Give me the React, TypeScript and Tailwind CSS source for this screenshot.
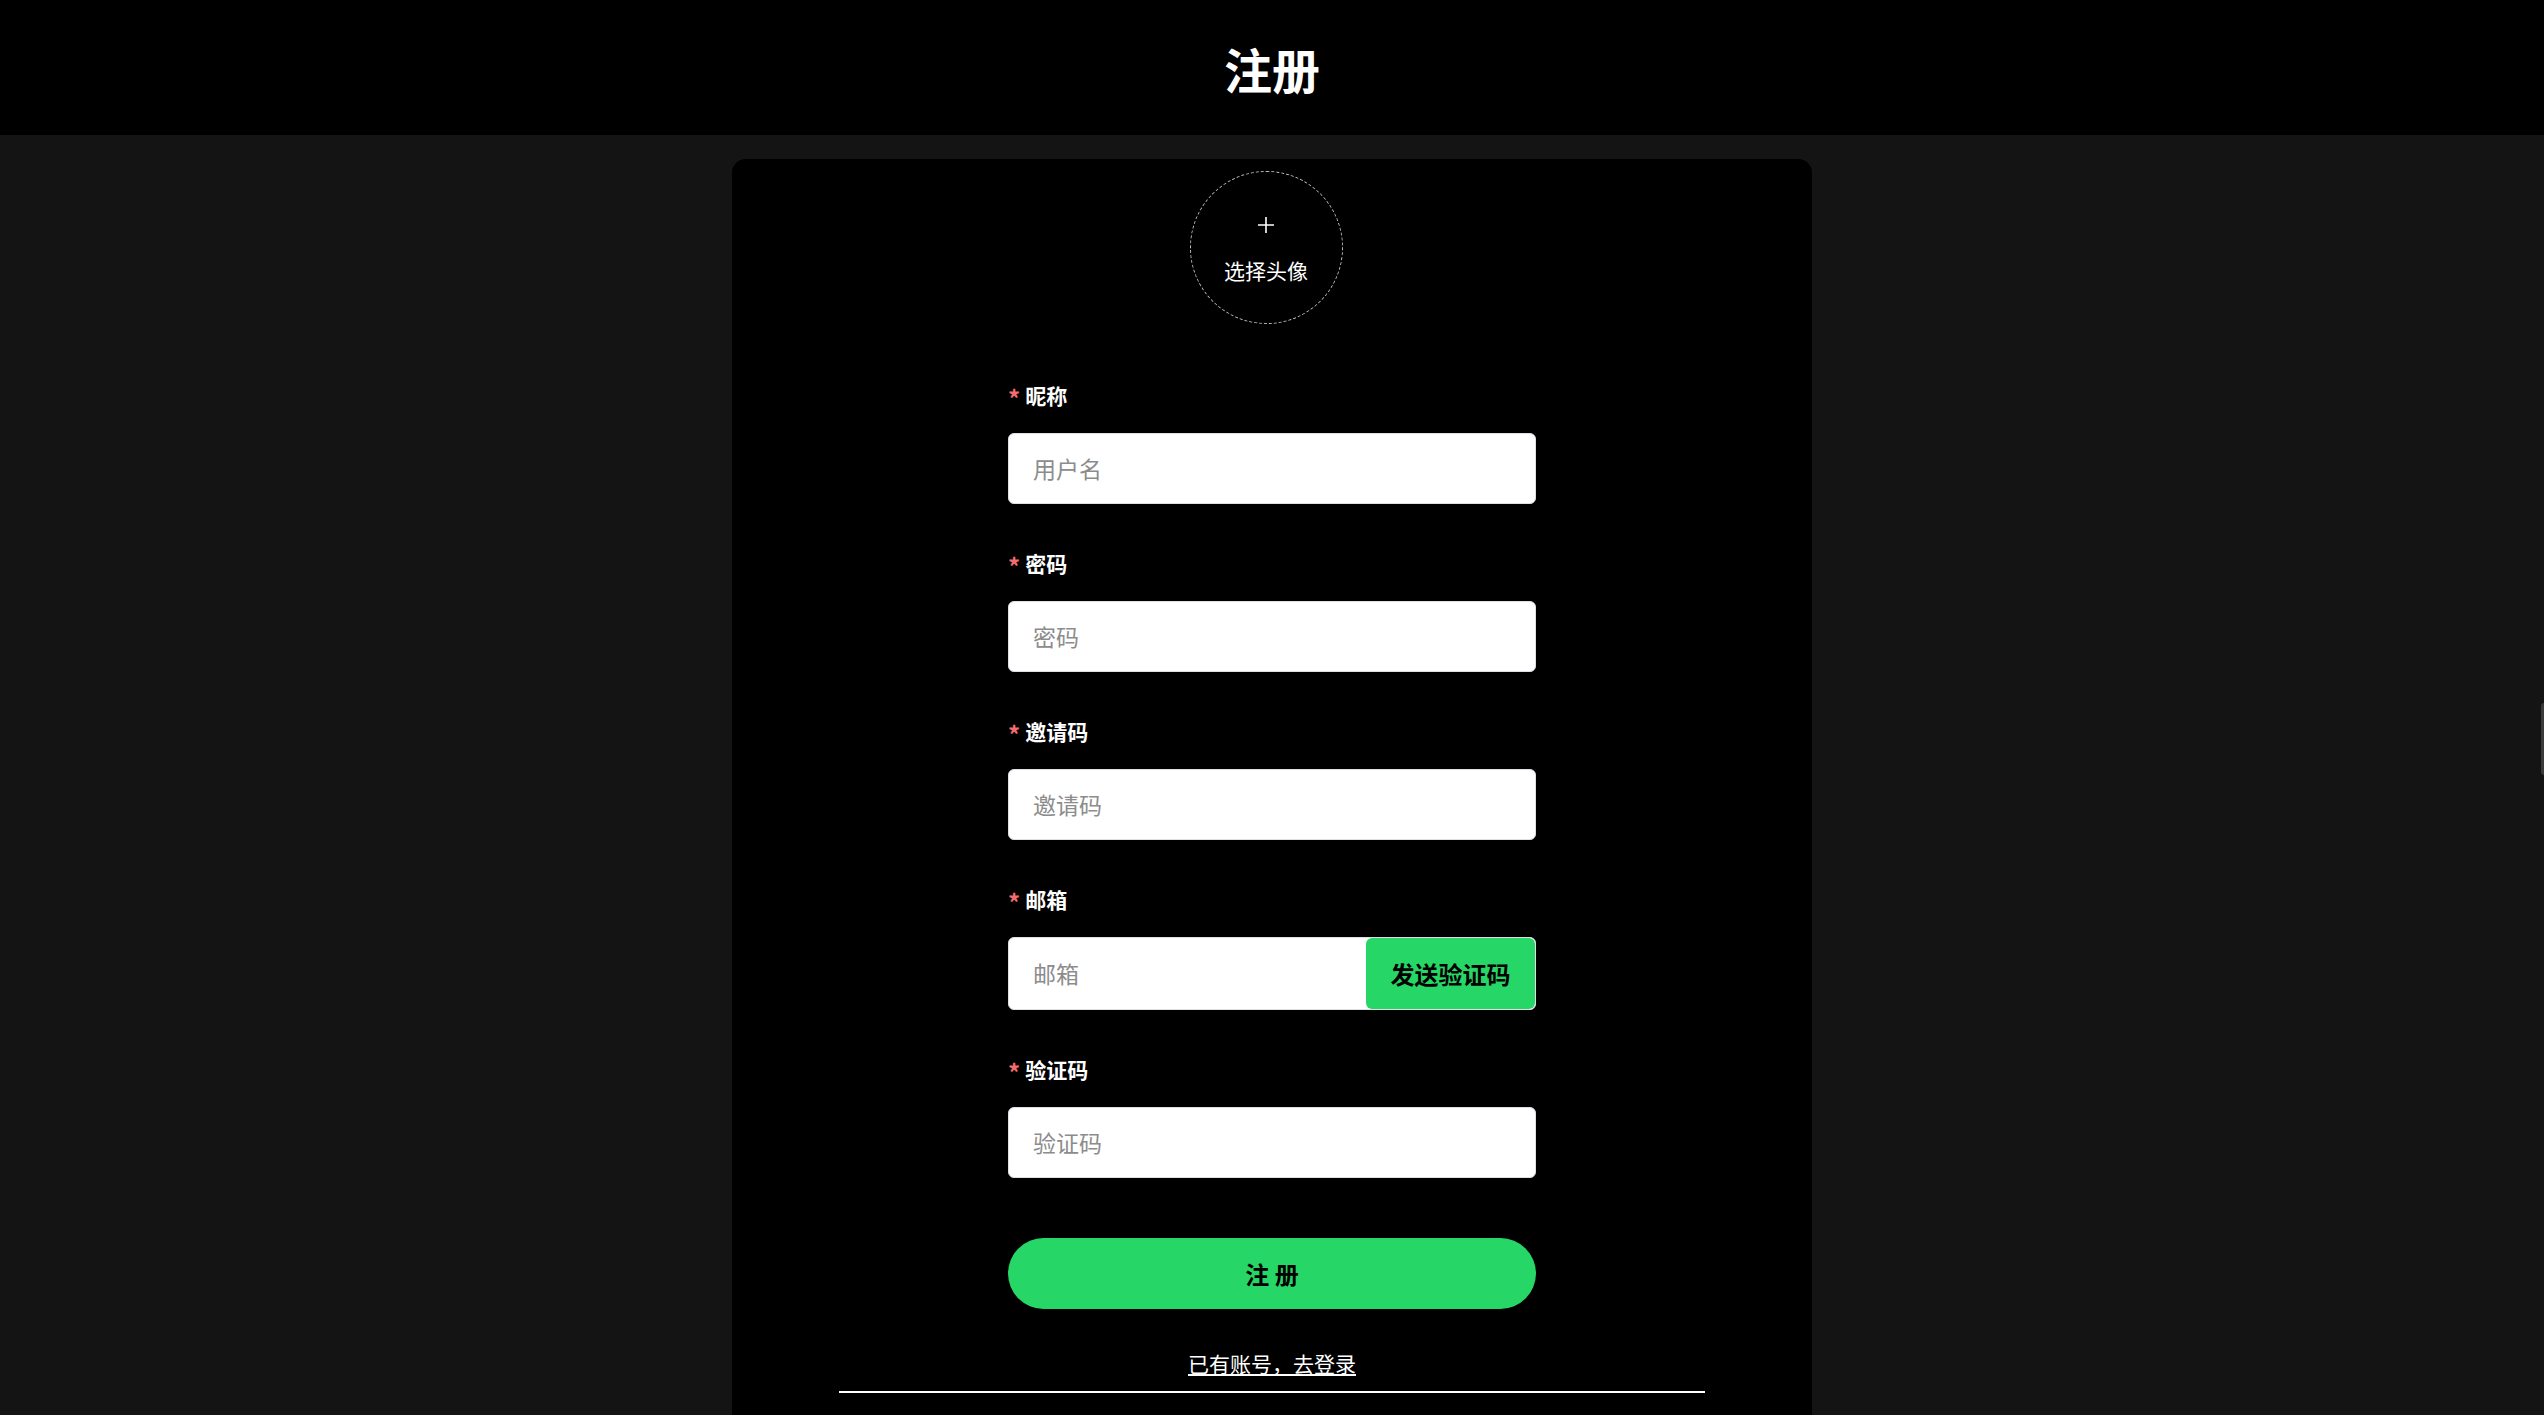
import { useState } from "react";

const fields = [
  { key: "nickname", label: "昵称", placeholder: "用户名" },
  { key: "password", label: "密码", placeholder: "密码" },
  { key: "invite", label: "邀请码", placeholder: "邀请码" },
  { key: "email", label: "邮箱", placeholder: "邮箱", withCode: true },
  { key: "code", label: "验证码", placeholder: "验证码" },
];

export default function App() {
  const [values, setValues] = useState<Record<string, string>>({});

  const onChange = (key: string, value: string) => {
    setValues((prev) => ({ ...prev, [key]: value }));
  };

  return (
    <div
      className="min-h-screen bg-[#141414] text-white"
      style={{ fontFamily: '"Noto Sans CJK SC", "Noto Sans", sans-serif' }}
    >
      <header className="h-[135px] bg-black flex items-center justify-center">
        <h1 className="text-[48px] font-bold leading-none">注册</h1>
      </header>

      <div className="w-[1080px] mx-auto mt-6 bg-black rounded-[14px] pt-3 pb-10">
        {/* avatar picker */}
        <div className="flex justify-center pr-3">
          <div className="w-[153px] h-[153px] rounded-full border border-dashed border-[#bdbdbd] flex flex-col items-center justify-center cursor-pointer">
            <svg width="18" height="18" viewBox="0 0 18 18" className="mt-[2px]">
              <path d="M9 1v16M1 9h16" stroke="white" strokeWidth="1.6" />
            </svg>
            <span className="text-[21px] leading-none mt-[26px]">选择头像</span>
          </div>
        </div>

        <form className="w-[528px] mx-auto mt-[59px]" onSubmit={(e) => e.preventDefault()}>
          {fields.map((f) => (
            <div key={f.key} className="mb-[47px]">
              <label className="flex items-center h-6 text-[21px] font-bold leading-6">
                <span className="text-[#f56c6c] text-[24px] leading-none mr-[5px] mt-[6px]">*</span>
                {f.label}
              </label>
              <div
                className={`mt-[26px] flex bg-white border border-[#dcdfe6] rounded-[6px] overflow-hidden ${
                  f.withCode ? "h-[73px]" : "h-[71px]"
                }`}
              >
                <input
                  className="flex-1 min-w-0 px-6 text-[23px] text-[#333] placeholder:text-[#8c8c8c] outline-none bg-transparent"
                  placeholder={f.placeholder}
                  type={f.key === "password" ? "password" : "text"}
                  value={values[f.key] || ""}
                  onChange={(e) => onChange(f.key, e.target.value)}
                />
                {f.withCode && (
                  <button
                    type="button"
                    className="w-[169px] bg-[#26d767] rounded-[6px] text-black text-[24px] font-bold"
                  >
                    发送验证码
                  </button>
                )}
              </div>
            </div>
          ))}

          <button
            type="submit"
            className="w-full h-[71px] mt-[13px] rounded-full bg-[#26d767] text-black text-[24px] font-bold"
          >
            注 册
          </button>

          <div className="mt-[42px] text-center">
            <a href="#" className="text-[21px] leading-6 text-white underline decoration-2 underline-offset-2">
              已有账号，去登录
            </a>
          </div>
        </form>

        <div className="w-[866px] mx-auto mt-[14px] border-t-2 border-white" />
      </div>

      {/* scrollbar thumb */}
      <div className="fixed right-0 top-[703px] w-[3px] h-[72px] rounded-l bg-[#3a3a3a]" />
    </div>
  );
}
